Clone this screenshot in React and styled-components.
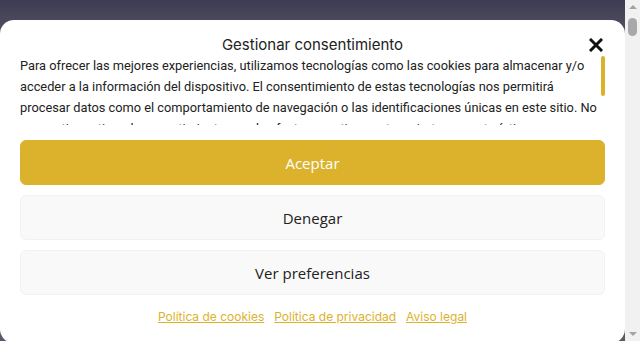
import React from 'react';
import styled, { createGlobalStyle } from 'styled-components';

const GlobalStyle = createGlobalStyle`
  html, body {
    margin: 0;
    padding: 0;
    height: 100%;
    overflow: hidden;
  }
  body {
    font-family: Inter, "Noto Sans", sans-serif;
  }
`;

const Screen = styled.div`
  display: flex;
  height: 100vh;
`;

const Stage = styled.div`
  flex: 1;
  overflow: hidden;
  padding-top: 20px;
  background: linear-gradient(180deg, #3d3b53 0px, #504f60 30px, #5a5966 341px);
`;

const Scrollbar = styled.div`
  width: 15px;
  background: #f1f1f1;
  display: flex;
  flex-direction: column;
  align-items: center;
`;

const Arrow = styled.div`
  width: 0;
  height: 0;
  border-left: 4px solid transparent;
  border-right: 4px solid transparent;
  ${p => (p.$down ? 'border-top: 4px solid #a3a3a3;' : 'border-bottom: 4px solid #a3a3a3;')}
  margin: ${p => (p.$down ? '0 0 5px' : '5px 0 0')};
`;

const ScrollThumb = styled.div`
  width: 9px;
  height: 18px;
  margin-top: 9px;
  border-radius: 5px;
  background: #a8a8a8;
`;

const ScrollSpace = styled.div`
  flex: 1;
`;

const Modal = styled.div`
  height: 323px;
  background: #fff;
  border-radius: 14px;
  padding: 15px 20px 0 20px;
  box-sizing: border-box;
  display: flex;
  flex-direction: column;
`;

const Header = styled.div`
  display: grid;
  grid-template-columns: 1fr auto 1fr;
  align-items: center;
  height: 20px;
`;

const Title = styled.h1`
  grid-column: 2;
  margin: 0;
  font-family: Inter, sans-serif;
  font-size: 15px;
  font-weight: 400;
  color: #222;
  line-height: 20px;
`;

const Close = styled.button`
  grid-column: 3;
  justify-self: end;
  width: 18px;
  height: 18px;
  padding: 0;
  border: 0;
  background: none;
  cursor: pointer;
  display: flex;
  align-items: center;
  justify-content: center;
`;

const MessageBox = styled.div`
  display: flex;
  gap: 3px;
  height: 70px;
`;

const Message = styled.div`
  flex: 1;
  overflow: hidden;
  font-family: Roboto, sans-serif;
  font-size: 12.8px;
  line-height: 21px;
  color: #222;
`;

const Track = styled.div`
  width: 4px;
  padding-top: 1px;
`;

const Thumb = styled.div`
  width: 4px;
  height: 40px;
  border-radius: 3px;
  background: #dcb22c;
`;

const Buttons = styled.div`
  display: flex;
  flex-direction: column;
  gap: 10px;
  margin-top: 15px;
`;

const Button = styled.button`
  height: 45px;
  border-radius: 6px;
  font-family: "Open Sans", sans-serif;
  font-size: 15px;
  cursor: pointer;
  border: 1px solid ${p => (p.$primary ? '#dcb22c' : '#f2f2f2')};
  background: ${p => (p.$primary ? '#dcb22c' : '#f9f9f9')};
  color: ${p => (p.$primary ? '#fff' : '#222')};
`;

const Links = styled.div`
  display: flex;
  justify-content: center;
  gap: 10px;
  margin-top: 14px;
`;

const DocLink = styled.a`
  font-family: Inter, sans-serif;
  font-size: 12px;
  color: #dcb22c;
  text-decoration: underline;
`;

const CloseIcon = () => (
  <svg width="14" height="14" viewBox="0 0 14 14">
    <path d="M2 2 L12 12 M12 2 L2 12" stroke="#111" strokeWidth="3" strokeLinecap="square" />
  </svg>
);

const App = () => {
  return (
    <Screen>
      <GlobalStyle />
      <Stage>
        <Modal>
          <Header>
            <Title>Gestionar consentimiento</Title>
            <Close aria-label="Cerrar">
              <CloseIcon />
            </Close>
          </Header>
          <MessageBox>
            <Message>
              Para ofrecer las mejores experiencias, utilizamos tecnologías como las cookies para almacenar y/o
              acceder a la información del dispositivo. El consentimiento de estas tecnologías nos permitirá
              procesar datos como el comportamiento de navegación o las identificaciones únicas en este sitio. No
              consentir o retirar el consentimiento, puede afectar negativamente a ciertas características y
              funciones.
            </Message>
            <Track>
              <Thumb />
            </Track>
          </MessageBox>
          <Buttons>
            <Button $primary>Aceptar</Button>
            <Button>Denegar</Button>
            <Button>Ver preferencias</Button>
          </Buttons>
          <Links>
            <DocLink href="#">Política de cookies</DocLink>
            <DocLink href="#">Política de privacidad</DocLink>
            <DocLink href="#">Aviso legal</DocLink>
          </Links>
        </Modal>
      </Stage>
      <Scrollbar>
        <Arrow />
        <ScrollThumb />
        <ScrollSpace />
        <Arrow $down />
      </Scrollbar>
    </Screen>
  );
};

export default App;
